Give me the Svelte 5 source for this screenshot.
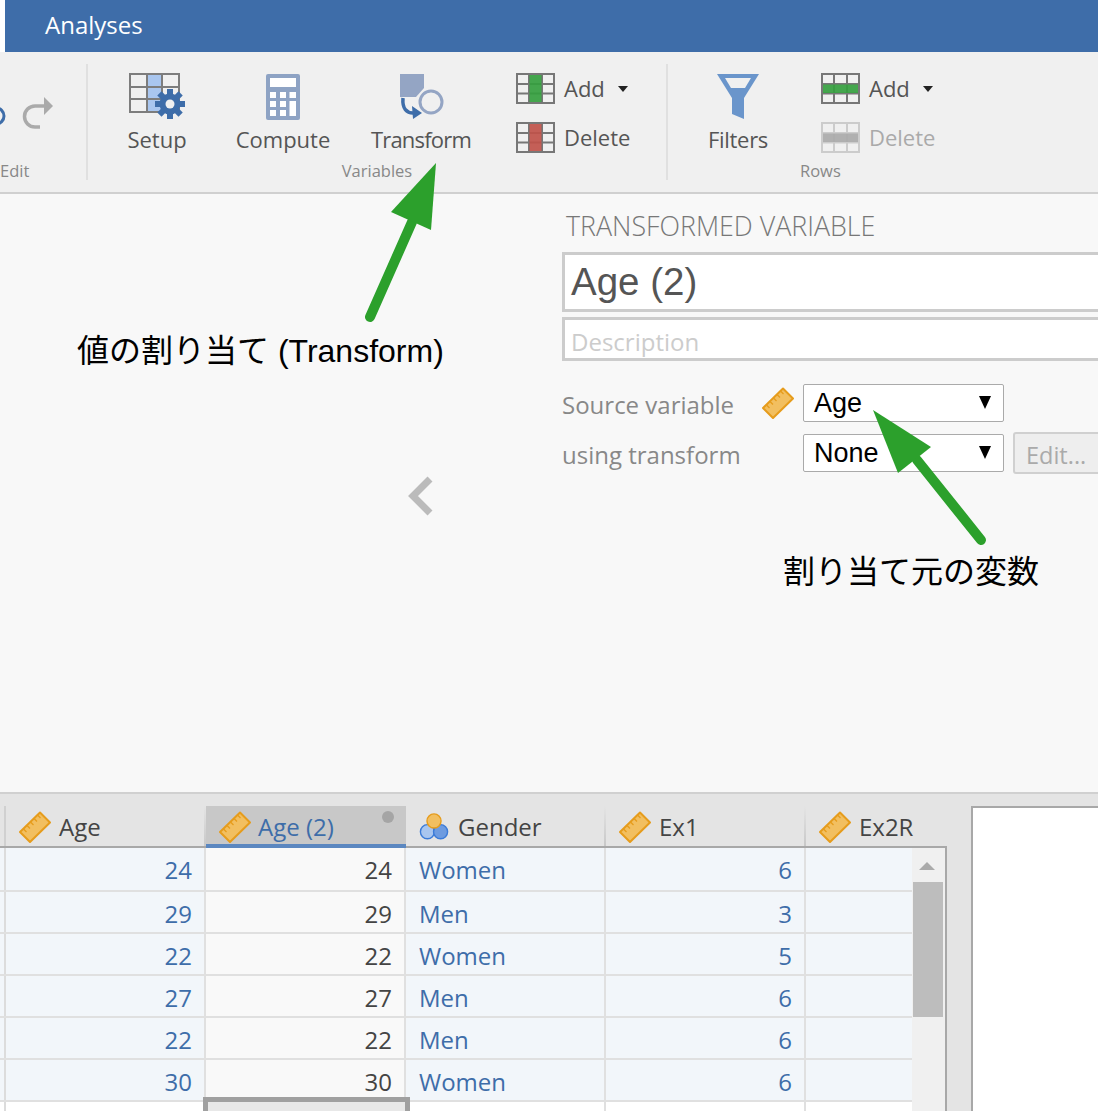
<script>
	const columns = [
		{ name: 'Age', type: 'ruler' },
		{ name: 'Age (2)', type: 'ruler', active: true, dot: true },
		{ name: 'Gender', type: 'nominal' },
		{ name: 'Ex1', type: 'ruler' },
		{ name: 'Ex2R', type: 'ruler', narrow: true }
	];
	const rows = [
		[24, 'Women', 6],
		[29, 'Men', 3],
		[22, 'Women', 5],
		[27, 'Men', 6],
		[22, 'Men', 6],
		[30, 'Women', 6]
	];
</script>

{#snippet ruler(size)}
	<svg class="ruler" width={size} height={size} viewBox="0 0 32 32">
		<path d="M21 1.500 L31 11.500 L11 31 L1 21 Z" fill="#f2bf60" stroke="#e69c1c" stroke-width="2" stroke-linejoin="round" />
		<path d="M18.500 4 l3 3 M15 7.500 l3 3 M11.500 11 l3 3 M8 14.500 l3 3 M4.500 18 l3 3" stroke="#e69c1c" stroke-width="1.300" />
	</svg>
{/snippet}

{#snippet grid(fill, stroke, mode)}
	<svg width="39" height="31" viewBox="0 0 39 31">
		<path d="M1 1 H38 V30 H1 Z M13 1 V30 M26 1 V30 M1 11 H38 M1 20.500 H38" fill="none" stroke={stroke} stroke-width="2" />
		{#if mode === 'col'}
			<rect x="13.500" y="2" width="12" height="27" fill={fill} opacity="0.92" />
		{:else}
			<rect x="2" y="11.500" width="35" height="8.500" fill={fill} opacity="0.92" />
		{/if}
	</svg>
{/snippet}

<div class="app">
	<header class="tabbar"><span>Analyses</span></header>

	<section class="ribbon">
		<div class="group edit">
			<div class="edit-icons">
				<svg width="58" height="40" viewBox="0 0 58 40">
					<circle cx="-4" cy="22" r="8" fill="none" stroke="#3e6da9" stroke-width="3" />
					<path d="M47 12 H35 a10.500 10.500 0 0 0 0 21 H40" fill="none" stroke="#aaa" stroke-width="3.500" />
					<path d="M44 3 L53 12 L44 21 Z" fill="#aaa" />
				</svg>
			</div>
			<div class="group-label">Edit</div>
		</div>

		<div class="group variables">
			<div class="tools">
				<button class="big setup">
					<svg width="60" height="48" viewBox="0 0 60 48">
						<rect x="18" y="1" width="16" height="39" fill="#a9c6ef" />
						<path d="M1 1 H50 V39 H1 Z M18 1 V39 M33 1 V39 M1 14 H50 M1 26 H50" fill="none" stroke="#7d7d7d" stroke-width="2" />
						<g transform="translate(41 31)">
							<circle r="10.500" fill="#3e6da9" />
							{#each [0, 45, 90, 135, 180, 225, 270, 315] as a}
								<rect x="-3" y="-15" width="6" height="6" fill="#3e6da9" transform="rotate({a})" />
							{/each}
							<circle r="4.500" fill="#f0f0f0" />
						</g>
					</svg>
					<span>Setup</span>
				</button>
				<button class="big compute">
					<svg width="36" height="48" viewBox="0 0 36 48">
						<rect x="1" y="1" width="34" height="46" rx="2" fill="#8ea3c4" />
						<rect x="5" y="5" width="26" height="9" fill="#fff" />
						{#each [19, 28, 37] as y}
							<rect x="5" y={y} width="6" height="6" fill="#fff" />
							<rect x="15" y={y} width="6" height="6" fill="#fff" />
						{/each}
						<rect x="24.500" y="19" width="6.500" height="6" fill="#fff" />
						<rect x="24.500" y="28" width="6.500" height="15" fill="#fff" />
					</svg>
					<span>Compute</span>
				</button>
				<button class="big transform">
					<svg width="48" height="48" viewBox="0 0 48 48">
						<path d="M3 1 H27 V15 L19 24 H3 Z" fill="#94a5c4" />
						<circle cx="34" cy="29" r="11" fill="#f0f0f0" stroke="#94a5c4" stroke-width="3" />
						<path d="M6 25 C5 36 10 40 16 40" fill="none" stroke="#3e6da9" stroke-width="3.500" />
						<path d="M15 33 L25 40 L16 46 Z" fill="#3e6da9" />
					</svg>
					<span>Transform</span>
				</button>
				<div class="stack">
					<button class="small">
						{@render grid('#35a03f', '#777', 'col')}
						<span>Add</span><i class="caret"></i>
					</button>
					<button class="small">
						{@render grid('#c0524a', '#777', 'col')}
						<span>Delete</span>
					</button>
				</div>
			</div>
			<div class="group-label">Variables</div>
		</div>

		<div class="group rows">
			<div class="tools">
				<button class="big filters">
					<svg width="44" height="48" viewBox="0 0 44 48">
						<path d="M1 1 H43 L28 25 V46 L16 41 V25 Z" fill="#6a95cb" />
						<path d="M9 5 H35 L29 15 H15 Z" fill="#f0f0f0" />
					</svg>
					<span>Filters</span>
				</button>
				<div class="stack">
					<button class="small">
						{@render grid('#35a03f', '#777', 'row')}
						<span>Add</span><i class="caret"></i>
					</button>
					<button class="small disabled">
						{@render grid('#aaa', '#ccc', 'row')}
						<span>Delete</span>
					</button>
				</div>
			</div>
			<div class="group-label">Rows</div>
		</div>
	</section>

	<main class="editor">
		<div class="gutter">
			<svg class="chevron" width="28" height="42" viewBox="0 0 28 42">
				<path d="M23 4 L6 21 L23 38" fill="none" stroke="#bbb" stroke-width="7" />
			</svg>
		</div>
		<div class="form">
			<h2>TRANSFORMED VARIABLE</h2>
			<div class="name">Age (2)</div>
			<div class="description">Description</div>
			<div class="form-row source">
				<label>Source variable</label>
				<span class="icon-slot">{@render ruler(32)}</span>
				<div class="select">Age<i></i></div>
			</div>
			<div class="form-row">
				<label>using transform</label>
				<span class="icon-slot"></span>
				<div class="select">None<i></i></div>
				<div class="edit-btn">Edit...</div>
			</div>
		</div>
	</main>

	<section class="sheet">
		<div class="table">
			<div class="head">
				<div class="stub"></div>
				{#each columns as col}
					<div class="hcell" class:active={col.active} class:narrow={col.narrow}>
						{#if col.type === 'ruler'}
							{@render ruler(32)}
						{:else}
							<svg class="nominal" width="30" height="30" viewBox="0 0 32 30">
								<circle cx="9" cy="20" r="7.500" fill="#a9c6ef" stroke="#3b7bd8" stroke-width="1.500" />
								<circle cx="23" cy="20" r="7.500" fill="#6d9be0" stroke="#3b7bd8" stroke-width="1.500" />
								<circle cx="16" cy="8.500" r="7.500" fill="#f2bf60" stroke="#e69c1c" stroke-width="1.500" />
							</svg>
						{/if}
						<span>{col.name}</span>
						{#if col.dot}<i class="dot"></i>{/if}
					</div>
				{/each}
			</div>
			<div class="body">
				<div class="cells">
					{#each rows as row}
						<div class="row">
							<div class="stub"></div>
							<div class="cell num">{row[0]}</div>
							<div class="cell num plain">{row[0]}</div>
							<div class="cell">{row[1]}</div>
							<div class="cell num">{row[2]}</div>
							<div class="cell narrow"></div>
						</div>
					{/each}
					<div class="row empty">
						<div class="stub"></div>
						<div class="cell"></div>
						<div class="cell selected"></div>
						<div class="cell"></div>
						<div class="cell"></div>
						<div class="cell narrow"></div>
					</div>
				</div>
				<div class="scrollbar">
					<i class="up"></i>
					<div class="thumb"></div>
				</div>
			</div>
		</div>
		<div class="results"></div>
	</section>

	<svg class="arrows" width="1098" height="1111" viewBox="0 0 1098 1111">
		<path d="M370 317 L412 222" stroke="#2ca02c" stroke-width="10" stroke-linecap="round" />
		<path d="M436 163 L431 230 L391 212 Z" fill="#2ca02c" />
		<path d="M981 540 L917 460" stroke="#2ca02c" stroke-width="10" stroke-linecap="round" />
		<path d="M873 410 L931 447 L898 473 Z" fill="#2ca02c" />
	</svg>
	<div class="note first">値の割り当て (Transform)</div>
	<div class="note second">割り当て元の変数</div>
</div>

<style>
	:global(body) {
		margin: 0;
		background: #fff;
	}

	.app {
		position: relative;
		width: 1098px;
		height: 1111px;
		overflow: hidden;
		display: flex;
		flex-direction: column;
		font-family: "Open Sans", sans-serif;
		color: #555;
	}

	.tabbar {
		height: 52px;
		margin-left: 5px;
		padding-left: 40px;
		background: #3e6da9;
		color: #fff;
		font-size: 24px;
		line-height: 50px;
		flex: none;
	}

	.ribbon {
		height: 142px;
		flex: none;
		display: flex;
		background: #f0f0f0;
		border-bottom: 2px solid #d0d0d0;
		box-sizing: border-box;
	}

	.group {
		position: relative;
		margin-top: 12px;
		height: 116px;
		box-sizing: border-box;
		border-right: 2px solid #e0e0e0;
	}
	.group-label {
		position: absolute;
		bottom: -2px;
		left: 0;
		right: 0;
		text-align: center;
		font-size: 16.500px;
		line-height: 22px;
		color: #888;
	}
	.edit {
		width: 88px;
	}
	.edit .group-label {
		left: 0;
		text-align: left;
	}
	.edit-icons {
		padding-top: 30px;
		line-height: 0;
	}
	.variables {
		width: 580px;
		padding-left: 6px;
	}
	.rows {
		width: 306px;
		border-right: none;
		padding-left: 0;
	}
	.rows .group-label {
		text-align: left;
		left: 132px;
	}

	.tools {
		display: flex;
	}
	button {
		all: unset;
		box-sizing: border-box;
		font-family: inherit;
	}
	.big {
		display: flex;
		flex-direction: column;
		align-items: center;
		width: 126px;
		padding-top: 9px;
		font-size: 22px;
		line-height: 30px;
		gap: 3px;
	}
	.big svg {
		display: block;
	}
	.setup svg {
		margin-left: 3px;
	}
	.transform {
		width: 150px;
		letter-spacing: -0.800px;
	}
	.filters {
		width: 140px;
		letter-spacing: -0.300px;
	}
	.stack {
		display: flex;
		flex-direction: column;
		gap: 18px;
		margin-left: 20px;
		padding-top: 9px;
	}
	.filters + .stack {
		margin-left: 13px;
	}
	.small {
		display: flex;
		align-items: center;
		gap: 9px;
		height: 31px;
		font-size: 22px;
	}
	.small span {
		margin-top: -1px;
	}
	.small.disabled {
		color: #aaa;
	}
	.caret {
		width: 0;
		height: 0;
		margin-left: 4px;
		border: 5.500px solid transparent;
		border-top: 6px solid #222;
		border-bottom: none;
	}

	.editor {
		height: 598px;
		flex: none;
		display: flex;
		background: #f8f8f8;
	}
	.gutter {
		position: relative;
		width: 562px;
		flex: none;
		box-sizing: border-box;
		padding: 281px 0 0 407px;
	}
	.form {
		flex: 1;
		min-width: 0;
		margin-right: -20px;
	}
	h2 {
		margin: 14px 0 8px 4px;
		font-size: 26.800px;
		font-weight: 300;
		line-height: 36px;
		color: #777;
		white-space: nowrap;
	}
	.name,
	.description {
		box-sizing: border-box;
		border: 3px solid #ccc;
		background: #fff;
		padding-left: 6px;
	}
	.name {
		height: 60px;
		font-family: "Liberation Sans", sans-serif;
		font-size: 38.500px;
		line-height: 54px;
		color: #555;
	}
	.description {
		height: 44px;
		margin-top: 5px;
		font-size: 24px;
		line-height: 43px;
		color: #ccc;
	}
	.form-row {
		display: flex;
		align-items: center;
		height: 38px;
		margin-top: 12px;
		white-space: nowrap;
	}
	.form-row.source {
		margin-top: 23px;
	}
	label {
		width: 200px;
		flex: none;
		font-size: 24px;
		color: #888;
		line-height: 38px;
		padding-top: 3px;
	}
	.icon-slot {
		width: 41px;
		flex: none;
		line-height: 0;
	}
	.select {
		position: relative;
		box-sizing: border-box;
		width: 201px;
		height: 38px;
		flex: none;
		border: 1.500px solid #aaa;
		border-radius: 2px;
		background: #fff;
		padding-left: 10px;
		font-family: "Liberation Sans", sans-serif;
		font-size: 27px;
		line-height: 36px;
		color: #000;
	}
	.select i {
		position: absolute;
		right: 12px;
		top: 11px;
		border: 6.500px solid transparent;
		border-top: 13px solid #000;
		border-bottom: none;
	}
	.edit-btn {
		box-sizing: border-box;
		width: 90px;
		height: 42px;
		margin-left: 9px;
		border: 2px solid #d0d0d0;
		border-radius: 3px;
		background: #eee;
		padding-left: 11px;
		font-size: 23.500px;
		line-height: 42px;
		color: #aaa;
	}

	.sheet {
		flex: 1;
		display: flex;
		border-top: 2px solid #d0d0d0;
		background: #e4e4e4;
		padding-top: 12px;
	}
	.table {
		width: 947px;
		flex: none;
		margin-top: -12px;
	}
	.head {
		display: flex;
		height: 54px;
		box-sizing: border-box;
		border-bottom: 2px solid #a8a8a8;
		color: #444;
	}
	.stub {
		width: 6px;
		flex: none;
		box-sizing: border-box;
		border-right: 2px solid #dcdcdc;
	}
	.head .stub {
		border-right: none;
		background: linear-gradient(to right, transparent 4px, #d0d0d0 4px) no-repeat 0 12px;
	}
	.hcell {
		position: relative;
		width: 200px;
		flex: none;
		box-sizing: border-box;
		display: flex;
		align-items: center;
		gap: 8px;
		padding: 13px 0 0 13px;
		font-size: 24px;
		white-space: nowrap;
	}
	.hcell::after {
		content: '';
		position: absolute;
		right: 0;
		top: 12px;
		bottom: 0;
		width: 2px;
		background: linear-gradient(#e4e4e4, #c8c8c8);
	}
	.hcell.narrow::after,
	.hcell.active::after {
		display: none;
	}
	.hcell.narrow {
		width: 140px;
	}
	.hcell.active {
		box-sizing: border-box;
		margin-top: 12px;
		padding-top: 3px;
		height: 42px;
		background: #c8c8c8;
		border-bottom: 4px solid #5b87c0;
		color: #3e6da9;
		gap: 7px;
	}
	.dot {
		position: absolute;
		right: 12px;
		top: 5px;
		width: 12px;
		height: 12px;
		border-radius: 50%;
		background: #a5a5a5;
	}
	.nominal {
		flex: none;
		margin-right: 1px;
	}
	.ruler {
		flex: none;
	}

	.body {
		position: relative;
		height: 263px;
		display: flex;
		box-sizing: border-box;
		background: #fff;
		border-right: 2px solid #a8a8a8;
	}
	.cells {
		flex: 1;
		min-width: 0;
	}
	.row {
		display: flex;
		height: 42px;
		box-sizing: border-box;
		border-bottom: 2px solid #e0e0e0;
		background: #f2f6fa;
	}
	.row:first-child {
		height: 44px;
	}
	.row.empty {
		background: #fff;
	}
	.cell {
		width: 200px;
		flex: none;
		box-sizing: border-box;
		border-right: 2px solid #e0e0e0;
		padding: 0 13px;
		font-size: 24px;
		line-height: 44px;
		color: #3e6da9;
	}
	.row:first-child .cell {
		line-height: 43px;
	}
	.cell.num {
		text-align: right;
		padding: 0 12px;
	}
	.cell.plain {
		background: #f9f9f9;
		color: #444;
	}
	.cell.narrow {
		width: 106px;
		border-right: none;
	}
	.cell.selected {
		position: relative;
		z-index: 1;
		height: 20px;
		margin: -5px -4px 0 -3px;
		width: 207px;
		border: 5px solid #a0a0a0;
		background: #e8e8e8;
	}
	.scrollbar {
		position: relative;
		width: 33px;
		flex: none;
		background: #f0f0f0;
		box-sizing: border-box;
		padding: 34px 2px 0 1px;
	}
	.up {
		position: absolute;
		left: 7px;
		top: 14px;
		border: 8.500px solid transparent;
		border-bottom: 8px solid #aaa;
		border-top: none;
	}
	.thumb {
		height: 135px;
		background: #bdbdbd;
	}
	.results {
		flex: 1;
		margin-left: 24px;
		border-top: 2px solid #a8a8a8;
		border-left: 2px solid #a8a8a8;
		background: #fff;
	}

	.arrows {
		position: absolute;
		left: 0;
		top: 0;
		pointer-events: none;
	}
	.note {
		position: absolute;
		font-family: "Liberation Sans", "Noto Sans CJK JP", sans-serif;
		font-size: 32px;
		line-height: 40px;
		color: #000;
		white-space: nowrap;
	}
	.first {
		left: 77px;
		top: 331px;
	}
	.second {
		left: 783px;
		top: 552px;
	}
</style>
